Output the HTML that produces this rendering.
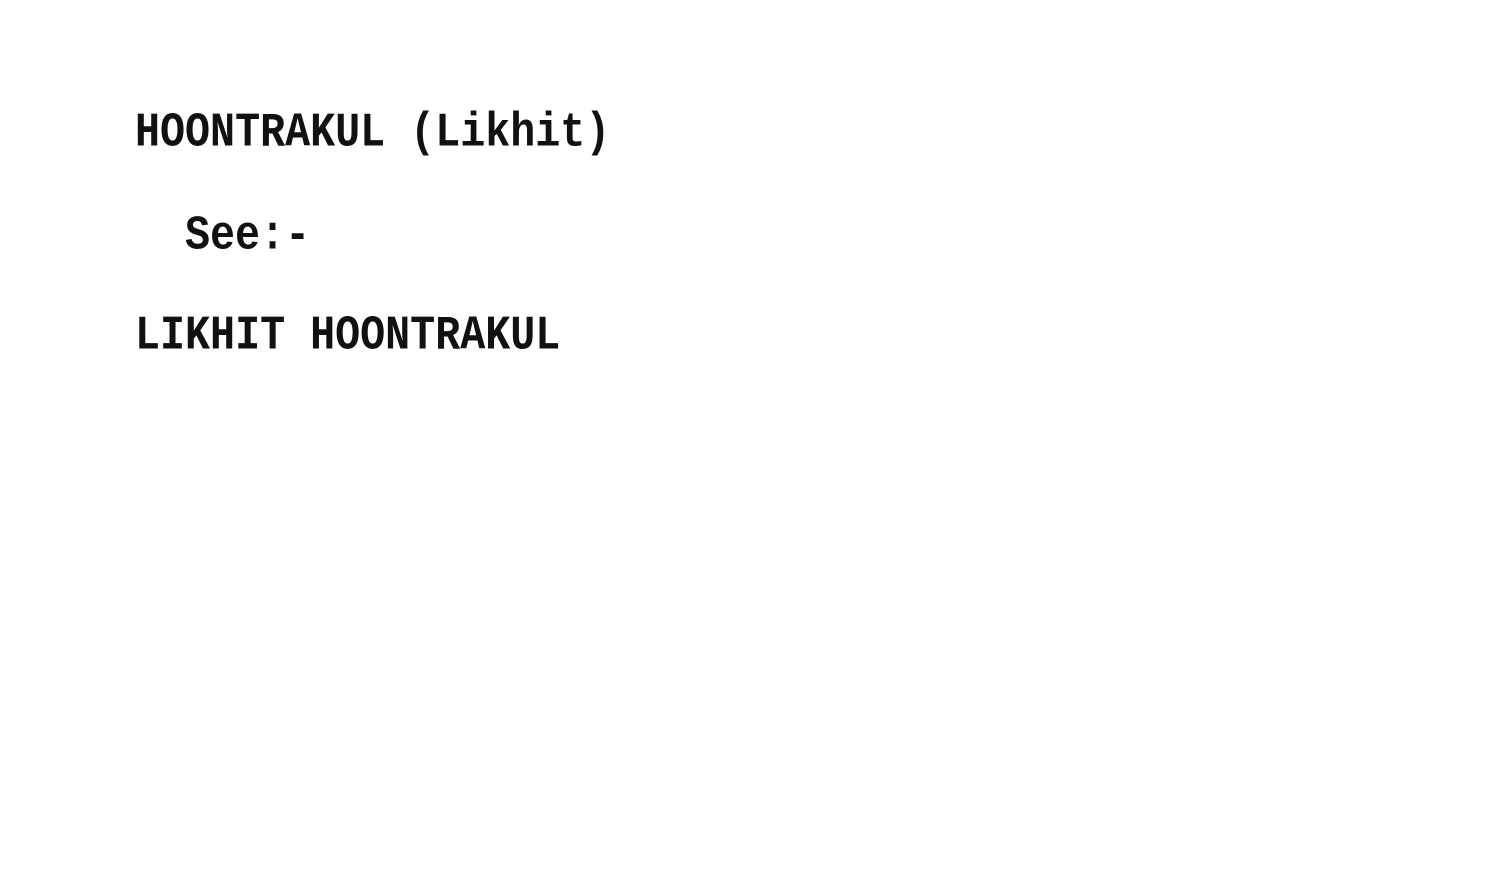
<!DOCTYPE html>
<html><head><style>
html,body{margin:0;padding:0;background:#fff;width:1490px;height:894px;overflow:hidden}
.t{position:absolute;font-family:"Liberation Mono",monospace;font-size:41.7px;color:#111;font-weight:bold;line-height:1;white-space:pre;transform:scaleY(1.15);transform-origin:0 100%}
</style></head><body>
<div class="t" style="left:135px;top:116px">HOONTRAKUL (Likhit)</div>
<div class="t" style="left:185px;top:219px">See:-</div>
<div class="t" style="left:135px;top:319px">LIKHIT HOONTRAKUL</div>
</body></html>
